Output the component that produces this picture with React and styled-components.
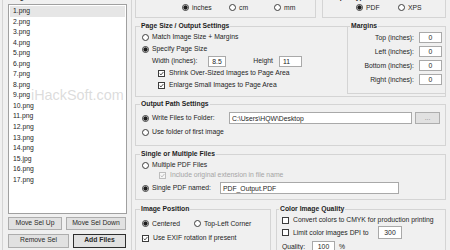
import styled, { createGlobalStyle } from 'styled-components';

const GlobalStyle = createGlobalStyle`
  html, body {
    margin: 0;
    padding: 0;
    background: #f0f0f0;
  }
  body {
    font-family: "Liberation Sans", Arial, sans-serif;
  }
`;

const Window = styled.div`
  position: relative;
  width: 450px;
  height: 250px;
  overflow: hidden;
  background: #f0f0f0;
  color: #1e1e1e;
  font-size: 6.8px;
  line-height: 10px;
`;

const Layout = styled.div`
  display: grid;
  grid-template-columns: 130px 311px;
  column-gap: 3px;
  margin-top: -7px;
  padding-left: 2px;
`;

const Column = styled.div`
  display: flex;
  flex-direction: column;
`;

const Group = styled.fieldset`
  box-sizing: border-box;
  flex: none;
  min-width: 0;
  margin: ${p => p.$mt || 0}px ${p => p.$mr || 0}px 0 0;
  padding: 0;
  width: ${p => (p.$w ? `${p.$w}px` : 'auto')};
  height: ${p => (p.$h ? `${p.$h}px` : 'auto')};
  border: 1px solid #d4d4d4;
`;

const Legend = styled.legend`
  margin-left: ${p => p.$ml ?? 4}px;
  padding: 0 1px;
  font-weight: bold;
  line-height: 8px;
  background: #f0f0f0;
  white-space: nowrap;
`;

const Body = styled.div`
  display: flex;
  flex-direction: column;
  align-items: flex-start;
  flex: ${p => (p.$grow ? 1 : 'none')};
  padding: ${p => p.$pad || 0};
`;

const SplitBody = styled.div`
  display: flex;
  align-items: flex-start;
`;

const Row = styled.div`
  display: flex;
  align-items: center;
  height: ${p => p.$h || 10}px;
  margin-top: ${p => p.$mt || 0}px;
  padding-left: ${p => p.$pl || 0}px;
`;

const GroupRow = styled.div`
  display: flex;
  gap: ${p => p.$gap}px;
  margin-top: ${p => p.$mt || 0}px;
`;

const Option = styled.span`
  display: inline-flex;
  align-items: center;
  gap: ${p => p.$gap || 3}px;
  flex: none;
  width: ${p => (p.$w ? `${p.$w}px` : 'auto')};
  color: ${p => (p.$disabled ? '#a5a5a5' : 'inherit')};
  white-space: nowrap;
`;

const RadioDot = styled.span`
  box-sizing: border-box;
  flex: none;
  width: 7px;
  height: 7px;
  border: 1px solid #3c3c3c;
  border-radius: 50%;
  background: ${p =>
    p.$on ? 'radial-gradient(circle, #1c1c1c 0 1.8px, #ffffff 2.4px)' : '#ffffff'};
`;

const Box = styled.span`
  box-sizing: border-box;
  display: flex;
  align-items: center;
  justify-content: center;
  flex: none;
  width: 7px;
  height: 7px;
  border: 1px solid ${p => (p.$disabled ? '#bdbdbd' : '#3c3c3c')};
  background: ${p => (p.$disabled ? '#f6f6f6' : '#ffffff')};
  color: ${p => (p.$disabled ? '#b5b5b5' : '#3a3a3a')};
`;

const Text = styled.span`
  flex: none;
  width: ${p => (p.$w ? `${p.$w}px` : 'auto')};
  margin-left: ${p => p.$ml || 0}px;
  white-space: nowrap;
`;

const Field = styled.div`
  box-sizing: border-box;
  display: flex;
  align-items: center;
  justify-content: ${p => (p.$align === 'center' ? 'center' : 'flex-start')};
  flex: none;
  width: ${p => p.$w}px;
  height: ${p => p.$h || 11}px;
  margin-left: ${p => p.$ml || 0}px;
  padding: 0 ${p => p.$px ?? 3}px;
  border: 1px solid #a9a9a9;
  background: #ffffff;
  color: #1e1e1e;
  line-height: 9px;
  white-space: nowrap;
  overflow: hidden;
`;

const Button = styled.button`
  box-sizing: border-box;
  flex: none;
  width: ${p => p.$w}px;
  height: ${p => p.$h || 13}px;
  margin: 0 0 0 ${p => p.$ml || 0}px;
  padding: 0;
  border: 1px solid ${p => (p.$primary ? '#2e2e2e' : '#adadad')};
  border-radius: 0;
  background: #e1e1e1;
  color: ${p => (p.$muted ? '#8c8c8c' : '#2a2a2a')};
  font: inherit;
  font-weight: ${p => (p.$primary ? 'bold' : 'normal')};
  line-height: 1;
`;

const ButtonRow = styled.div`
  display: flex;
  gap: 4px;
  margin-top: ${p => p.$mt}px;
`;

const FileList = styled.ul`
  box-sizing: border-box;
  width: 119px;
  height: 210px;
  margin: 0;
  padding: 1px;
  list-style: none;
  background: #ffffff;
  border: 1px solid #a0a0a0;
  overflow: hidden;
`;

const FileItem = styled.li`
  height: 10.55px;
  line-height: 10.55px;
  padding-left: 3px;
  background: ${p => (p.$selected ? '#e6e6e6' : 'transparent')};
`;

const MarginRow = styled.div`
  display: flex;
  align-items: center;
  justify-content: flex-end;
  gap: 5px;
  width: 100%;
  height: 11px;
  margin-top: ${p => p.$mt || 0}px;
`;

const Underscore = styled.span`
  display: inline-block;
  width: 3.8px;
  height: 0.9px;
  margin-top: 5px;
  background: #1e1e1e;
`;

const Watermark = styled.div`
  position: absolute;
  left: 31px;
  top: 87px;
  font-size: 14.4px;
  line-height: 16px;
  color: rgba(185, 185, 185, 0.5);
  pointer-events: none;
  white-space: nowrap;
`;

function Radio({ on, children, w }) {
  return (
    <Option $w={w}>
      <RadioDot $on={on} />
      {children}
    </Option>
  );
}

function Check({ on, disabled, children, w }) {
  return (
    <Option $w={w} $gap={4} $disabled={disabled}>
      <Box $disabled={disabled}>
        {on && (
          <svg width="5" height="5" viewBox="0 0 5 5">
            <path d="M0.7 2.6 L2 3.9 L4.4 1" fill="none" stroke="currentColor" strokeWidth="0.9" />
          </svg>
        )}
      </Box>
      {children}
    </Option>
  );
}

const files = [
  '1.png', '2.png', '3.png', '4.png', '5.png', '6.png', '7.png', '8.png', '9.png',
  '10.png', '11.png', '12.png', '13.png', '14.png', '15.jpg', '16.png', '17.png'
];

const margins = ['Top (inches):', 'Left (inches):', 'Bottom (inches):', 'Right (inches):'];

export default function App() {
  return (
    <Window>
      <GlobalStyle />
      <Layout>
        <Column>
          <Group $h={270}>
            <Legend>Image Files</Legend>
            <Body $pad="3px 0 0 5px">
              <FileList>
                {files.map((f, i) => (
                  <FileItem key={f} $selected={i === 0}>{f}</FileItem>
                ))}
              </FileList>
              <ButtonRow $mt={3}>
                <Button $w={54}>Move Sel Up</Button>
                <Button $w={60}>Move Sel Down</Button>
              </ButtonRow>
              <ButtonRow $mt={4}>
                <Button $w={61} $h={13.5}>Remove Sel</Button>
                <Button $w={53} $h={13.5} $primary>Add Files</Button>
              </ButtonRow>
            </Body>
          </Group>
        </Column>

        <Column>
          <GroupRow $gap={6}>
            <Group $w={181} $h={25}>
              <Legend>Units of Measure</Legend>
              <Body $pad="2px 0 0 46px">
                <Row $h={9}>
                  <Radio on w={47}>inches</Radio>
                  <Radio w={45}>cm</Radio>
                  <Radio>mm</Radio>
                </Row>
              </Body>
            </Group>
            <Group $w={124} $h={25}>
              <Legend>Output Type</Legend>
              <Body $pad="2px 0 0 33px">
                <Row $h={9}>
                  <Radio on w={42}>PDF</Radio>
                  <Radio>XPS</Radio>
                </Row>
              </Body>
            </Group>
          </GroupRow>

          <Group $mt={4} $h={75}>
            <Legend>Page Size / Output Settings</Legend>
            <SplitBody>
              <Body $grow $pad="1px 0 0 6px">
                <Row $h={12}>
                  <Radio>Match Image Size + Margins</Radio>
                </Row>
                <Row $h={12}>
                  <Radio on>Specify Page Size</Radio>
                </Row>
                <Row $h={12}>
                  <Text $ml={10}>Width (inches):</Text>
                  <Field $ml={11} $w={18}>8.5</Field>
                  <Text $ml={27}>Height</Text>
                  <Field $ml={6} $w={23}>11</Field>
                </Row>
                <Row $h={12} $pl={16}>
                  <Check on>Shrink Over-Sized Images to Page Area</Check>
                </Row>
                <Row $h={12} $pl={16}>
                  <Check on>Enlarge Small Images to Page Area</Check>
                </Row>
              </Body>
              <Group $w={99} $h={72} $mt={-8} $mr={-1}>
                <Legend $ml={2}>Margins</Legend>
                <Body $pad="2px 3px 0 0">
                  {margins.map((m, i) => (
                    <MarginRow key={m} $mt={i ? 3 : 0}>
                      <Text>{m}</Text>
                      <Field $w={23} $align="center">0</Field>
                    </MarginRow>
                  ))}
                </Body>
              </Group>
            </SplitBody>
          </Group>

          <Group $mt={3} $h={46}>
            <Legend>Output Path Settings</Legend>
            <Body $pad="4px 0 0 6px">
              <Row $h={12}>
                <Radio on w={87}>Write Files to Folder:</Radio>
                <Field $w={183} $h={12} $px={2}>{'C:\\Users\\HQW\\Desktop'}</Field>
                <Button $ml={3} $w={25} $h={12} $muted>...</Button>
              </Row>
              <Row $mt={3}>
                <Radio>Use folder of first image</Radio>
              </Row>
            </Body>
          </Group>

          <Group $mt={4} $h={50}>
            <Legend>Single or Multiple Files</Legend>
            <Body $pad="2px 0 0 6px">
              <Row>
                <Radio>Multiple PDF Files</Radio>
              </Row>
              <Row $pl={17}>
                <Check on disabled>Include original extension in file name</Check>
              </Row>
              <Row $h={12} $mt={2}>
                <Radio on w={78}>Single PDF named:</Radio>
                <Field $w={179} $h={12} $px={2}>PDF_Output.PDF</Field>
              </Row>
            </Body>
          </Group>

          <GroupRow $gap={5} $mt={5}>
            <Group $w={136} $h={60}>
              <Legend>Image Position</Legend>
              <Body $pad="5.5px 0 0 6px">
                <Row>
                  <Radio on w={52}>Centered</Radio>
                  <Radio>Top-Left Corner</Radio>
                </Row>
                <Row $mt={4.5}>
                  <Check on>Use EXIF rotation if present</Check>
                </Row>
              </Body>
            </Group>
            <Group $w={170} $h={60}>
              <Legend $ml={2}>Color Image Quality</Legend>
              <Body $pad="2px 0 0 5px">
                <Row>
                  <Check>Convert colors to CMYK for production printing</Check>
                </Row>
                <Row $h={13} $mt={1}>
                  <Check w={96}>Limit color images DPI to</Check>
                  <Field $w={24} $h={13} $align="center">300</Field>
                </Row>
                <Row $h={11} $mt={2}>
                  <Text $w={30}>Quality:</Text>
                  <Field $w={23} $h={11} $align="center">100</Field>
                  <Text $ml={4}>%</Text>
                </Row>
              </Body>
            </Group>
          </GroupRow>
        </Column>
      </Layout>
      <Watermark>iHackSoft.com</Watermark>
    </Window>
  );
}
